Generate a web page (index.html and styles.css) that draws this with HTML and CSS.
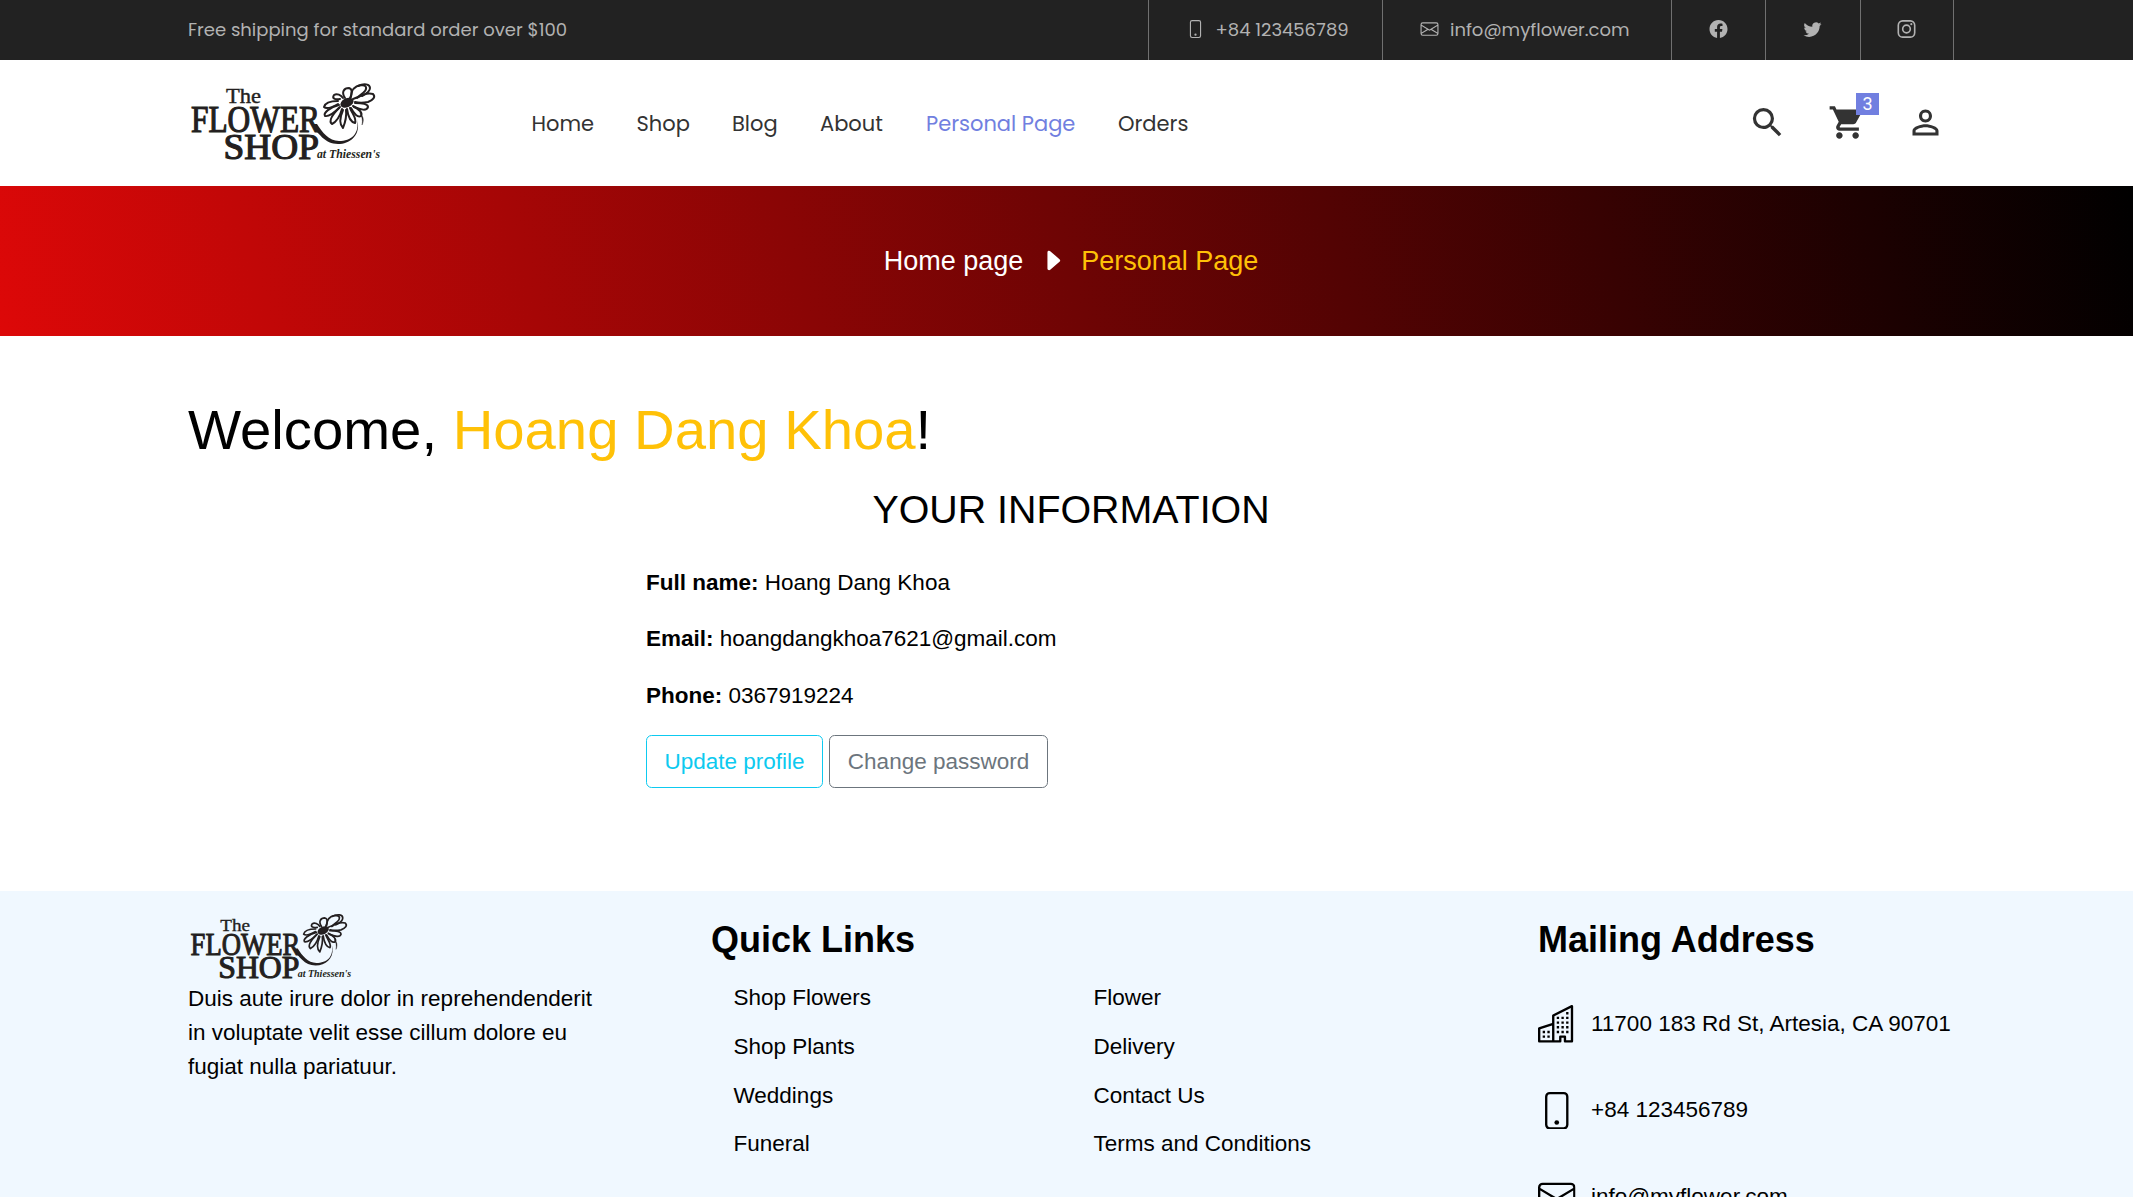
FILE: index.html
```html
<!DOCTYPE html>
<html lang="en">
<head>
<meta charset="utf-8">
<title>Personal Page</title>
<link rel="stylesheet" href="styles.css">
</head>
<body>
<svg class="sprite" aria-hidden="true">
  <symbol id="phone" viewBox="0 0 16 16"><path d="M11 1a1 1 0 0 1 1 1v12a1 1 0 0 1-1 1H5a1 1 0 0 1-1-1V2a1 1 0 0 1 1-1h6zM5 0a2 2 0 0 0-2 2v12a2 2 0 0 0 2 2h6a2 2 0 0 0 2-2V2a2 2 0 0 0-2-2H5z"/><path d="M8 14a1 1 0 1 0 0-2 1 1 0 0 0 0 2z"/></symbol>
  <symbol id="mail" viewBox="0 0 16 16"><path d="M0 4a2 2 0 0 1 2-2h12a2 2 0 0 1 2 2v8a2 2 0 0 1-2 2H2a2 2 0 0 1-2-2V4Zm2-1a1 1 0 0 0-1 1v.217l7 4.2 7-4.2V4a1 1 0 0 0-1-1H2Zm13 2.383-4.708 2.825L15 11.105V5.383Zm-.034 6.876-5.64-3.471L8 9.583l-1.326-.795-5.64 3.47A1 1 0 0 0 2 13h12a1 1 0 0 0 .966-.741ZM1 11.105l4.708-2.897L1 5.383v5.722Z"/></symbol>
  <symbol id="daisy" viewBox="8 6 194 80">
    <path d="M131 49c7 9 14 20 27 20 12 0 21-8 20-20l-1-5c3 15-6 22-18 22-10 0-17-9-22-17z"/>
    <path d="M180 38c4 4 4 8 2 12 1-5 0-8-2-12z" stroke="currentColor"/>
    <g fill="none" stroke="currentColor" stroke-width="2" stroke-linecap="round" stroke-linejoin="round">
      <path d="M165 23c-4-6-1-10 4-10 4 1 3 6 1 10"/>
      <path d="M171 22c0-7 4-11 10-12 7 0 6 5 2 8-3 3-6 5-10 6"/>
      <path d="M178 11c6-3 12-2 12 2 0 3-4 6-8 8"/>
      <path d="M177 23c6-4 12-5 16-4 3 3 0 6-5 8-5 1-9 1-13 0"/>
      <path d="M175 28c7 0 13 1 13 4-1 4-7 3-14 0"/>
      <path d="M173 31c6 3 10 7 8 10-3 2-7-2-10-8"/>
      <path d="M170 33c3 7 7 11 5 15-4-1-7-7-8-14"/>
      <path d="M166 35c1 8-1 13-3 18-4-4-3-11 0-18"/>
      <path d="M162 34c-2 7-6 13-10 15-4-3 1-10 7-16"/>
      <path d="M160 32c-6 6-11 10-15 9-2-3 5-9 14-11"/>
      <path d="M158 29c-7 4-12 5-14 3 1-4 7-6 14-6"/>
      <path d="M160 24c-6 1-8-1-6-4 3-2 7 0 9 3"/>
    </g>
    <ellipse cx="167" cy="27.7" rx="7" ry="4.5" transform="rotate(-25 167 27.7)"/>
  </symbol>
</svg>

<div class="topbar">
  <div class="container topbar-row">
    <p>Free shipping for standard order over $100</p>
    <div class="contacts">
      <a class="contact contact-phone"><svg class="icon-sm"><use href="#phone"/></svg><span>+84 123456789</span></a>
      <a class="contact contact-mail"><svg class="icon-sm"><use href="#mail"/></svg><span>info@myflower.com</span></a>
      <a class="contact social"><svg class="icon-sm" viewBox="0 0 16 16"><path d="M16 8.049c0-4.446-3.582-8.05-8-8.05C3.58 0-.002 3.603-.002 8.05c0 4.017 2.926 7.347 6.75 7.951v-5.625h-2.03V8.05H6.75V6.275c0-2.017 1.195-3.131 3.022-3.131.876 0 1.791.157 1.791.157v1.98h-1.009c-.993 0-1.303.621-1.303 1.258v1.51h2.218l-.354 2.326H9.25V16c3.824-.604 6.75-3.934 6.75-7.951z"/></svg></a>
      <a class="contact social"><svg class="icon-sm" viewBox="0 0 16 16"><path d="M5.026 15c6.038 0 9.341-5.003 9.341-9.334 0-.14 0-.282-.006-.422A6.685 6.685 0 0 0 16 3.542a6.658 6.658 0 0 1-1.889.518 3.301 3.301 0 0 0 1.447-1.817 6.533 6.533 0 0 1-2.087.793A3.286 3.286 0 0 0 7.875 6.03a9.325 9.325 0 0 1-6.767-3.429 3.289 3.289 0 0 0 1.018 4.382A3.323 3.323 0 0 1 .64 6.575v.045a3.288 3.288 0 0 0 2.632 3.218 3.203 3.203 0 0 1-.865.115 3.23 3.23 0 0 1-.614-.057 3.283 3.283 0 0 0 3.067 2.277A6.588 6.588 0 0 1 .78 13.58a6.32 6.32 0 0 1-.78-.045A9.344 9.344 0 0 0 5.026 15z"/></svg></a>
      <a class="contact social"><svg class="icon-sm" viewBox="0 0 16 16"><g fill="none" stroke="currentColor" stroke-width="1.45"><rect x=".72" y=".72" width="14.56" height="14.56" rx="4"/><circle cx="8" cy="8" r="3.4"/></g><circle cx="12.27" cy="3.73" r=".96"/></svg></a>
    </div>
  </div>
</div>

<header class="header">
  <div class="container header-row">
    <svg class="logo" viewBox="8 6 194 80">
      <text x="46" y="28.3" font-size="20" textLength="35" lengthAdjust="spacingAndGlyphs">The</text>
      <text class="logo-heavy" x="11" y="57" font-size="37.5" textLength="129" lengthAdjust="spacingAndGlyphs">FLOWER</text>
      <text class="logo-heavy" x="43.5" y="83.5" font-size="36" textLength="95.5" lengthAdjust="spacingAndGlyphs">SHOP</text>
      <text class="logo-script" x="137" y="82.5" font-size="13" textLength="63" lengthAdjust="spacingAndGlyphs">at Thiessen's</text>
      <use href="#daisy" x="8" y="6" width="194" height="80"/>
    </svg>
    <nav class="nav">
      <a class="n-home">Home</a><a class="n-shop">Shop</a><a class="n-blog">Blog</a><a class="n-about">About</a><a class="n-personal active">Personal Page</a><a class="n-orders">Orders</a>
    </nav>
    <div class="tools">
      <svg class="tool" viewBox="0 0 24 24"><path d="M15.5 14h-.79l-.28-.27A6.471 6.471 0 0 0 16 9.5 6.5 6.5 0 1 0 9.5 16c1.61 0 3.09-.59 4.23-1.57l.27.28v.79l5 4.99L20.49 19l-4.99-5zm-6 0C7.01 14 5 11.99 5 9.5S7.01 5 9.5 5 14 7.01 14 9.5 11.99 14 9.5 14z"/></svg>
      <div class="cart">
        <svg class="tool" viewBox="0 0 24 24"><path d="M7 18c-1.1 0-1.99.9-1.99 2S5.9 22 7 22s2-.9 2-2-.9-2-2-2zM1 2v2h2l3.6 7.59-1.35 2.45c-.16.28-.25.61-.25.96 0 1.1.9 2 2 2h12v-2H7.42c-.14 0-.25-.11-.25-.25l.03-.12.9-1.63h7.45c.75 0 1.41-.41 1.75-1.03l3.58-6.49A1.003 1.003 0 0 0 20 4H5.21l-.94-2H1zm16 16c-1.1 0-1.99.9-1.99 2s.89 2 1.99 2 2-.9 2-2-.9-2-2-2z"/></svg>
        <span class="badge">3</span>
      </div>
      <svg class="tool" viewBox="0 0 24 24"><path d="M12 5.9a2.1 2.1 0 1 1 0 4.2 2.1 2.1 0 0 1 0-4.2m0 9c2.97 0 6.1 1.46 6.1 2.1v1.1H5.9V17c0-.64 3.13-2.1 6.1-2.1M12 4C9.79 4 8 5.79 8 8s1.79 4 4 4 4-1.79 4-4-1.79-4-4-4zm0 9c-2.67 0-8 1.34-8 4v3h16v-3c0-2.66-5.33-4-8-4z"/></svg>
    </div>
  </div>
</header>

<div class="breadcrumb">
  <a>Home page</a>
  <svg class="caret" viewBox="0 0 16 16"><path d="m12.14 8.753-5.482 4.796c-.646.566-1.658.106-1.658-.753V3.204a1 1 0 0 1 1.659-.753l5.48 4.796a1 1 0 0 1 0 1.506z"/></svg>
  <span class="gold">Personal Page</span>
</div>

<main class="container main">
  <h1>Welcome, <span class="gold">Hoang Dang Khoa</span>!</h1>
  <h3>YOUR INFORMATION</h3>
  <section class="info">
    <p><b>Full name:</b> Hoang Dang Khoa</p>
    <p><b>Email:</b> hoangdangkhoa7621@gmail.com</p>
    <p><b>Phone:</b> 0367919224</p>
    <a class="btn btn-info">Update profile</a>
    <a class="btn btn-secondary">Change password</a>
  </section>
</main>

<footer class="footer">
  <div class="container footer-row">
    <section class="about">
      <svg class="logo-small" viewBox="8 6 194 80">
        <text x="46" y="28.3" font-size="20" textLength="35" lengthAdjust="spacingAndGlyphs">The</text>
        <text class="logo-heavy" x="11" y="57" font-size="37.5" textLength="129" lengthAdjust="spacingAndGlyphs">FLOWER</text>
        <text class="logo-heavy" x="43.5" y="83.5" font-size="36" textLength="95.5" lengthAdjust="spacingAndGlyphs">SHOP</text>
        <text class="logo-script" x="137" y="82.5" font-size="13" textLength="63" lengthAdjust="spacingAndGlyphs">at Thiessen's</text>
        <use href="#daisy" x="8" y="6" width="194" height="80"/>
      </svg>
      <p>Duis aute irure dolor in reprehendenderit in voluptate velit esse cillum dolore eu fugiat nulla pariatuur.</p>
    </section>
    <section class="quick">
      <h2>Quick Links</h2>
      <div class="links">
        <a>Shop Flowers</a><a>Flower</a>
        <a>Shop Plants</a><a>Delivery</a>
        <a>Weddings</a><a>Contact Us</a>
        <a>Funeral</a><a>Terms and Conditions</a>
      </div>
    </section>
    <section class="mailing">
      <h2>Mailing Address</h2>
      <p><svg class="icon-lg" viewBox="0 0 16 16"><path d="M14.763.075A.5.5 0 0 1 15 .5v15a.5.5 0 0 1-.5.5h-3a.5.5 0 0 1-.5-.5V14h-1v1.5a.5.5 0 0 1-.5.5h-9a.5.5 0 0 1-.5-.5V10a.5.5 0 0 1 .342-.474L6 7.64V4.5a.5.5 0 0 1 .276-.447l8-4a.5.5 0 0 1 .487.022zM6 8.694 1 10.36V15h5V8.694zM7 15h2v-1.5a.5.5 0 0 1 .5-.5h2a.5.5 0 0 1 .5.5V15h2V1.309l-7 3.5V15z"/><path d="M2 11h1v1H2v-1zm2 0h1v1H4v-1zm-2 2h1v1H2v-1zm2 0h1v1H4v-1zm4-4h1v1H8V9zm2 0h1v1h-1V9zm-2 2h1v1H8v-1zm2 0h1v1h-1v-1zm2-2h1v1h-1V9zm0 2h1v1h-1v-1zM8 7h1v1H8V7zm2 0h1v1h-1V7zm2 0h1v1h-1V7zM8 5h1v1H8V5zm2 0h1v1h-1V5zm2 0h1v1h-1V5zm0-2h1v1h-1V3z"/></svg>11700 183 Rd St, Artesia, CA 90701</p>
      <p><svg class="icon-lg"><use href="#phone"/></svg>+84 123456789</p>
      <p><svg class="icon-lg"><use href="#mail"/></svg>info@myflower.com</p>
    </section>
  </div>
</footer>
</body>
</html>
```
FILE: styles.css
```css
* { box-sizing: border-box; margin: 0; padding: 0; }
html, body { height: 100%; overflow: hidden; }
body {
  display: flex;
  flex-direction: column;
  font: 22.5px/33.75px Arial, "Liberation Sans", sans-serif;
  color: #000;
  background: #fff;
}
svg { display: block; flex: none; fill: currentColor; }
.sprite { position: absolute; width: 0; height: 0; }
.container { width: 1766px; margin-left: 188px; }
.gold { color: #ffc107; }

.topbar { flex: none; height: 60px; background: #222; color: #b2b2b2; font: 18px/60px Poppins, Inter, sans-serif; }
.topbar-row, .contacts { display: flex; justify-content: space-between; height: 60px; }
.contact { display: flex; align-items: center; border-left: 1px solid #707070; height: 60px; white-space: nowrap; }
.contact:last-child { border-right: 1px solid #707070; }
.contact svg { margin-top: -2px; }
.contact-phone { width: 233.5px; padding-left: 37px; gap: 10.5px; }
.contact-mail { width: 289px; padding-left: 37.5px; gap: 11px; }
.social { width: 94.5px; justify-content: center; }
.icon-sm { width: 19px; height: 18px; }

.header { flex: none; height: 126px; }
.header-row { display: flex; height: 126px; position: relative; }
.logo { width: 194px; height: 80px; margin-top: 21px; }
.logo, .logo-small { color: #231f20; font-family: "Liberation Serif", serif; stroke-width: .4; }
.logo text, .logo-small text { stroke: currentColor; }
.logo .logo-heavy, .logo-small .logo-heavy { stroke-width: 1.2; }
.logo-script { font-style: italic; font-weight: bold; stroke-width: 0; }
.nav { display: flex; gap: 42px; margin-left: 149.5px; padding-top: 1px; color: #333; font: 21px/126px Poppins, Inter, sans-serif; white-space: nowrap; }
.nav .active { color: #717fe0; }
.n-home { width: 63px; }
.n-shop { width: 53.5px; }
.n-blog { width: 46px; }
.n-about { width: 64px; }
.n-personal { width: 150px; }
.tools { display: flex; gap: 40px; margin-left: auto; padding: 43px 9.5px 0 0; color: #333; }
.tool { width: 39px; height: 39px; }
.cart { position: relative; height: 39px; padding-left: 1.5px; margin-right: -1.5px; }
.badge { position: absolute; left: 29.5px; top: -10px; width: 23px; height: 22px; background: #717fe0; color: #fff; font: 18px/22px Roboto, sans-serif; text-align: center; }

.breadcrumb {
  flex: none;
  display: flex;
  align-items: center;
  justify-content: center;
  gap: 15.5px;
  height: 150px;
  padding-left: 9px;
  font-size: 27px;
  color: #fff;
  background: linear-gradient(75deg, #dd0808, #000);
}
.breadcrumb a, .breadcrumb span { padding-top: 1px; }
.caret { width: 27px; height: 27px; margin-top: -2px; }

.main { flex: none; height: 555px; padding-top: 60px; }
h1 { font-size: 56.25px; line-height: 67.5px; font-weight: 400; }
h3 { font-size: 39.375px; line-height: 47px; font-weight: 400; margin-top: 22px; text-align: center; }
.info { margin: 33.5px 0 0 458px; }
.info p { margin-bottom: 22.7px; }
.btn { display: inline-block; border: 1px solid; border-radius: 5.6px; padding: 8.4px 17.5px; }
.btn-info { color: #0dcaf0; }
.btn-secondary { color: #6c757d; }

.footer { flex: 1 0 306px; height: 306px; overflow: hidden; background: #f0f8ff; }
.footer-row { display: flex; }
.about { width: 523px; padding: 21px 100px 0 0; }
.logo-small { width: 165px; height: 68px; }
.about p { margin-top: 2px; }
.quick { width: 827px; }
h2 { font-size: 36px; line-height: 43px; padding-top: 27px; }
.links { display: grid; grid-template-columns: 360px auto; row-gap: 15px; padding: 20px 0 0 22.5px; }
.mailing p { display: flex; align-items: center; gap: 15.5px; height: 37.5px; margin-bottom: 49.1px; white-space: nowrap; }
.mailing h2 { margin-bottom: 44px; }
.icon-lg { width: 37.5px; height: 37.5px; }
```
